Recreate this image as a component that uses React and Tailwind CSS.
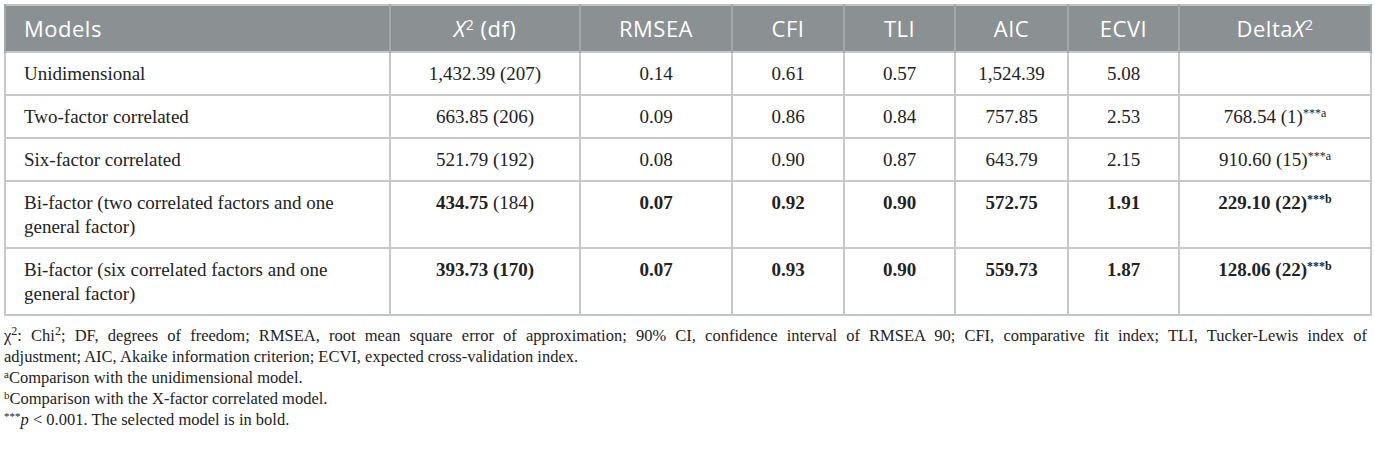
// App.jsx
const serif = { fontFamily: '"Liberation Serif", "Times New Roman", serif' }
const sans = { fontFamily: '"Open Sans", "Liberation Sans", sans-serif' }

const COLS = [
  { key: 'model', label: 'Models', w: 'w-[385px]' },
  { key: 'chi', label: null, w: 'w-[190px]' },
  { key: 'rmsea', label: 'RMSEA', w: 'w-[152px]' },
  { key: 'cfi', label: 'CFI', w: 'w-[112px]' },
  { key: 'tli', label: 'TLI', w: 'w-[111px]' },
  { key: 'aic', label: 'AIC', w: 'w-[113px]' },
  { key: 'ecvi', label: 'ECVI', w: 'w-[111px]' },
  { key: 'delta', label: null, w: 'w-[192px]' },
]

const Stars = ({ sup }) => <sup className="text-[12px]">***{sup}</sup>

const ROWS = [
  {
    model: 'Unidimensional',
    chi: '1,432.39 (207)',
    rmsea: '0.14',
    cfi: '0.61',
    tli: '0.57',
    aic: '1,524.39',
    ecvi: '5.08',
    delta: '',
  },
  {
    model: 'Two-factor correlated',
    chi: '663.85 (206)',
    rmsea: '0.09',
    cfi: '0.86',
    tli: '0.84',
    aic: '757.85',
    ecvi: '2.53',
    delta: <>768.54 (1)<Stars sup="a" /></>,
  },
  {
    model: 'Six-factor correlated',
    chi: '521.79 (192)',
    rmsea: '0.08',
    cfi: '0.90',
    tli: '0.87',
    aic: '643.79',
    ecvi: '2.15',
    delta: <>910.60 (15)<Stars sup="a" /></>,
  },
  {
    model: 'Bi-factor (two correlated factors and one general factor)',
    chi: <><b>434.75</b> (184)</>,
    rmsea: <b>0.07</b>,
    cfi: <b>0.92</b>,
    tli: <b>0.90</b>,
    aic: <b>572.75</b>,
    ecvi: <b>1.91</b>,
    delta: <b>229.10 (22)<Stars sup="b" /></b>,
  },
  {
    model: 'Bi-factor (six correlated factors and one general factor)',
    chi: <b>393.73 (170)</b>,
    rmsea: <b>0.07</b>,
    cfi: <b>0.93</b>,
    tli: <b>0.90</b>,
    aic: <b>559.73</b>,
    ecvi: <b>1.87</b>,
    delta: <b>128.06 (22)<Stars sup="b" /></b>,
  },
]

function HeaderLabel({ col }) {
  if (col.key === 'chi') {
    return (
      <>
        <i>X</i>
        <sup className="text-[14px]">2</sup> (df)
      </>
    )
  }
  if (col.key === 'delta') {
    return (
      <>
        Delta<i>X</i>
        <sup className="text-[14px]">2</sup>
      </>
    )
  }
  return col.label
}

export default function App() {
  return (
    <div className="bg-white w-[1375px] h-[449px] px-[4px] pt-[4px] text-[#222]">
      <table className="border-collapse border-2 border-[#c0c4c0] table-fixed w-[1367px]">
        <thead>
          <tr className="bg-[#8b9093] h-[47px]">
            {COLS.map((col, i) => (
              <th
                key={col.key}
                className={`${col.w} border-x-2 border-[#a4a8aa] font-normal text-white text-[22px] tracking-[0.5px] px-[18px] ${i === 0 ? 'text-left' : 'text-center'}`}
                style={sans}
              >
                <HeaderLabel col={col} />
              </th>
            ))}
          </tr>
        </thead>
        <tbody style={serif}>
          {ROWS.map((row, r) => (
            <tr key={r} className="border-t-2 border-[#c8c8c8]">
              {COLS.map((col, i) => (
                <td
                  key={col.key}
                  className={`border-x-2 border-[#c8c8c8] align-top text-[19px] leading-[24px] pt-[9px] pb-[8px] ${i === 0 ? 'text-left pl-[18px] pr-[30px]' : 'text-center px-[10px]'}`}
                >
                  {row[col.key]}
                </td>
              ))}
            </tr>
          ))}
        </tbody>
      </table>

      <div className="pt-[9px] text-[16.5px] leading-[21px] text-[#222] pr-[4px]" style={serif}>
        <p className="text-justify [text-align-last:justify]">
          χ<sup className="text-[12px]">2</sup>: Chi<sup className="text-[12px]">2</sup>; DF, degrees of freedom; RMSEA, root mean square error of approximation; 90% CI, confidence interval of RMSEA 90; CFI, comparative fit index; TLI, Tucker-Lewis index of
        </p>
        <p>adjustment; AIC, Akaike information criterion; ECVI, expected cross-validation index.</p>
        <p>
          <sup className="text-[11px]">a</sup>Comparison with the unidimensional model.
        </p>
        <p>
          <sup className="text-[11px]">b</sup>Comparison with the X-factor correlated model.
        </p>
        <p>
          <sup className="text-[11px]">***</sup>
          <i>p</i> &lt; 0.001. The selected model is in bold.
        </p>
      </div>
    </div>
  )
}
